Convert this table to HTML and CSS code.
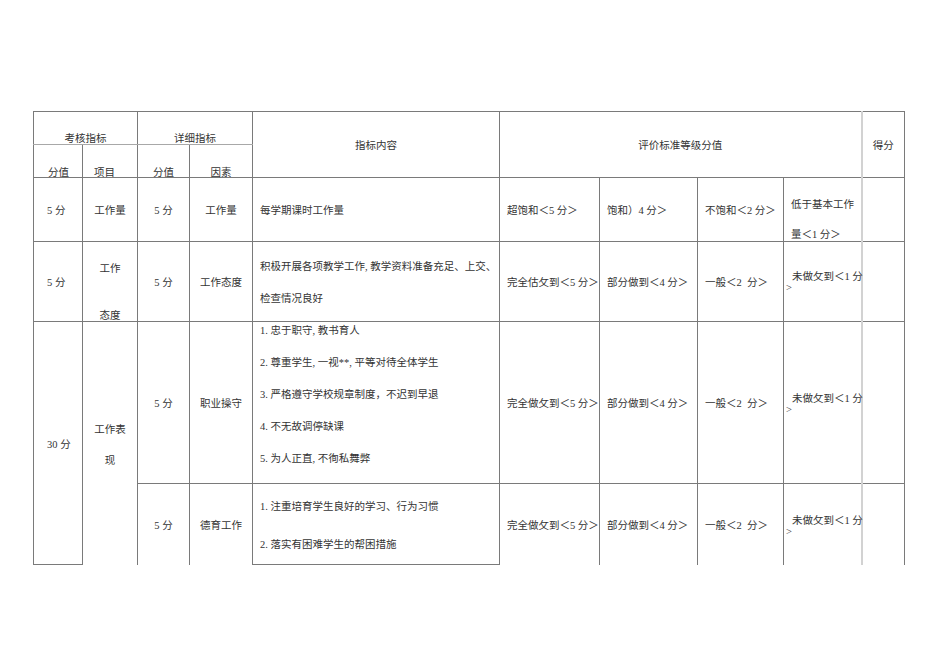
FILE: index.html
```html
<!DOCTYPE html>
<html lang="zh-CN">
<head>
<meta charset="utf-8">
<title>考核指标</title>
<link rel="stylesheet" href="styles.css">
</head>
<body>
<div class="page">
<table class="grid">
  <colgroup>
    <col class="c1"><col class="c2"><col class="c3"><col class="c4"><col class="c5">
    <col class="c6"><col class="c7"><col class="c8"><col class="c9"><col class="c10">
  </colgroup>
  <tr class="h1">
    <td colspan="2" class="grp">考核指标</td>
    <td colspan="2" class="grp">详细指标</td>
    <td rowspan="2" class="hmid">指标内容</td>
    <td rowspan="2" colspan="4" class="hmid">评价标准等级分值</td>
    <td rowspan="2" class="hmid score">得分</td>
  </tr>
  <tr class="h2">
    <td class="sub left1">分值</td>
    <td class="sub item">项目</td>
    <td class="sub">分值</td>
    <td class="sub">因素</td>
  </tr>
  <tr class="r1">
    <td class="left1">5 分</td>
    <td>工作量</td>
    <td>5 分</td>
    <td>工作量</td>
    <td class="txt">每学期课时工作量</td>
    <td class="txt">超饱和＜5 分＞</td>
    <td class="txt">饱和）4 分＞</td>
    <td class="txt">不饱和＜2 分＞</td>
    <td class="txt top"><div class="low">低于基本工作<br>量＜1 分＞</div></td>
    <td class="score"></td>
  </tr>
  <tr class="r2">
    <td class="left1">5 分</td>
    <td class="top"><div class="wide2">工作<br>态度</div></td>
    <td>5 分</td>
    <td>工作态度</td>
    <td class="txt lh32">积极开展各项教学工作, 教学资料准备充足、上交、<br>检查情况良好</td>
    <td class="txt">完全估攵到＜5 分＞</td>
    <td class="txt">部分做到＜4 分＞</td>
    <td class="txt">一般＜2&nbsp; 分＞</td>
    <td class="txt tight first">未做攵到＜1 分<br>&gt;</td>
    <td class="score"></td>
  </tr>
  <tr class="r3">
    <td rowspan="2" class="left1">30 分</td>
    <td rowspan="2" class="lh31 nb">工作表<br>现</td>
    <td>5 分</td>
    <td>职业操守</td>
    <td class="txt top">
      <div class="list">
        <div>1. 忠于职守, 教书育人</div>
        <div>2. 尊重学生, 一视**, 平等对待全体学生</div>
        <div>3. 严格遵守学校规章制度，不迟到早退</div>
        <div>4. 不无故调停缺课</div>
        <div>5. 为人正直, 不徇私舞弊</div>
      </div>
    </td>
    <td class="txt">完全做攵到＜5 分＞</td>
    <td class="txt">部分做到＜4 分＞</td>
    <td class="txt">一般＜2&nbsp; 分＞</td>
    <td class="txt tight">未做攵到＜1 分<br>&gt;</td>
    <td class="score"></td>
  </tr>
  <tr class="r4">
    <td class="nb">5 分</td>
    <td class="nb">德育工作</td>
    <td class="txt lh38">1. 注重培育学生良好的学习、行为习惯<br>2. 落实有困难学生的帮困措施</td>
    <td class="txt nb">完全做攵到＜5 分＞</td>
    <td class="txt nb">部分做到＜4 分＞</td>
    <td class="txt nb">一般＜2&nbsp; 分＞</td>
    <td class="txt tight nb">未做攵到＜1 分<br>&gt;</td>
    <td class="score nb"></td>
  </tr>
</table>
</div>
</body>
</html>
```
FILE: styles.css
```css
html, body {
  margin: 0;
  padding: 0;
  background: #ffffff;
}

.page {
  padding: 111px 0 0 33px;
  font-family: "Liberation Serif", "Noto Sans CJK SC", serif;
  font-size: 10.5px;
  color: #333333;
}

.grid {
  border-collapse: collapse;
  table-layout: fixed;
  width: 872px;
}

.c1 { width: 49px; }
.c2 { width: 55px; }
.c3 { width: 52px; }
.c4 { width: 63px; }
.c5 { width: 247px; }
.c6 { width: 100px; }
.c7 { width: 98px; }
.c8 { width: 86px; }
.c9 { width: 78px; }
.c10 { width: 43px; }

.grid td {
  border: 1px solid #7a7a7a;
  padding: 3px 0 0 0;
  text-align: center;
  vertical-align: middle;
  line-height: 12px;
  white-space: nowrap;
  overflow: visible;
}

.h1 { height: 33px; }
.h2 { height: 33px; }
.r1 { height: 64px; }
.r2 { height: 80px; }
.r3 { height: 162px; }
.r4 { height: 81px; }

.grid td.grp {
  vertical-align: bottom;
  line-height: 11px;
  padding: 0;
  border-bottom-color: #a8a8a8;
}

.grid td.sub {
  vertical-align: bottom;
  line-height: 8px;
  padding: 0;
  border-top-color: #a8a8a8;
}

.grid td.hmid {
  padding: 2px 0 0 0;
}

.grid td.left1 {
  text-align: left;
  padding-left: 13px;
}

.grid td.sub.left1 {
  padding-left: 14px;
}

.grid td.item {
  text-align: left;
  padding-left: 11px;
}

.grid td.txt {
  text-align: left;
  padding-left: 7px;
}

.grid td.top {
  vertical-align: top;
  padding-top: 0;
}

.grid td.score {
  border-left: 2px solid #d2d2d2;
}

.grid td.nb {
  border-bottom: none;
}

.low {
  line-height: 30px;
  padding-top: 12px;
  height: 48px;
}

.wide2 {
  line-height: 47px;
  padding-top: 3px;
  height: 70px;
}

.grid td.lh32 { line-height: 31.6px; }
.grid td.lh31 { line-height: 31px; }
.grid td.lh38 { line-height: 37.7px; padding-top: 4px; }

.grid td.tight {
  line-height: 11px;
  padding-left: 2px;
  text-indent: 6px;
  white-space: nowrap;
}

.grid td.tight.first {
  padding-top: 0;
}

.list {
  display: flex;
  flex-direction: column;
  gap: 14px;
  line-height: 18px;
}
```
